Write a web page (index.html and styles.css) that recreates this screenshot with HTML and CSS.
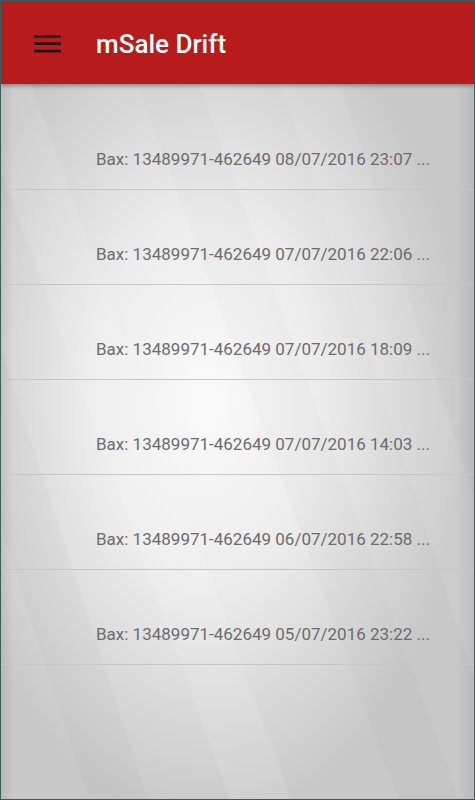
FILE: index.html
```html
<!DOCTYPE html>
<html lang="en">
<head>
    <meta charset="UTF-8">
    <meta name="viewport" content="width=device-width, initial-scale=1.0">
    <title>mSale Drift</title>
    <link rel="stylesheet" href="styles.css">
</head>
<body>
    <div class="screen">
        <!-- TOP BAR -->
        <div class="topbar">
            <button class="menu" aria-label="menu">
                <svg width="28" height="18" viewBox="0 0 28 18">
                    <rect x="0" y="0" width="27" height="2.6" fill="#1c0606"/>
                    <rect x="0" y="7.4" width="27" height="2.6" fill="#1c0606"/>
                    <rect x="0" y="14.8" width="27" height="2.6" fill="#1c0606"/>
                </svg>
            </button>
            <h1 class="title">mSale Drift</h1>
        </div>
        <!-- LIST OF ORDERS -->
        <ul class="orders">
            <li class="order">Bax: 13489971-462649 08/07/2016 23:07 ...</li>
            <li class="order">Bax: 13489971-462649 07/07/2016 22:06 ...</li>
            <li class="order">Bax: 13489971-462649 07/07/2016 18:09 ...</li>
            <li class="order">Bax: 13489971-462649 07/07/2016 14:03 ...</li>
            <li class="order">Bax: 13489971-462649 06/07/2016 22:58 ...</li>
            <li class="order">Bax: 13489971-462649 05/07/2016 23:22 ...</li>
        </ul>
    </div>
</body>
</html>
```

FILE: styles.css
```css
/*PAGE*/
body{
    margin: 0;
    font-family: Roboto, "Noto Sans", sans-serif;
}
.screen{
    box-sizing: border-box;
    width: 475px;
    height: 800px;
    border: 1px solid #3d5b5b;
    overflow: hidden;
    background-color: #d6d6d6;
    background-image:
        linear-gradient(to right, rgba(0,0,0,0.08), rgba(0,0,0,0) 12px, rgba(0,0,0,0) 455px, rgba(0,0,0,0.07)),
        linear-gradient(70deg, rgba(255,255,255,0) 30%, rgba(255,255,255,0.1) 30%, rgba(255,255,255,0.1) 38%, rgba(255,255,255,0) 38%, rgba(255,255,255,0) 52%, rgba(0,0,0,0.015) 52%, rgba(0,0,0,0.015) 60%, rgba(255,255,255,0) 60%),
        linear-gradient(72deg, rgba(0,0,0,0) 12%, rgba(0,0,0,0.02) 12%, rgba(0,0,0,0.02) 20%, rgba(0,0,0,0) 20%, rgba(0,0,0,0) 70%, rgba(255,255,255,0.08) 70%, rgba(255,255,255,0.08) 78%, rgba(0,0,0,0) 78%),
        radial-gradient(ellipse 260px 420px at 205px 400px, #fbfbfb 0%, #ececec 45%, #d2d2d2 85%, #c8c8c8 100%);
}
/*TOP BAR*/
.topbar{
    display: flex;
    align-items: center;
    height: 83px;
    background-color: #b71b1c;
    box-shadow: 0 2px 4px rgba(0,0,0,0.35);
    position: relative;
}
.menu{
    display: flex;
    background: none;
    border: none;
    padding: 0;
    margin: 2px 0 0 33px;
    cursor: pointer;
}
.title{
    margin: 3px 0 0 34px;
    color: #ffffff;
    font-size: 26px;
    font-weight: 500;
    line-height: 30px;
}
/*ORDERS*/
.orders{
    list-style-type: none;
    margin: 11px 0 0 0;
    padding: 0;
}
.order{
    padding: 54px 0 20px 95px;
    line-height: 20px;
    font-size: 17px;
    color: #6c6c6c;
    border-bottom: 1px solid #c6c6c6;
}
```
